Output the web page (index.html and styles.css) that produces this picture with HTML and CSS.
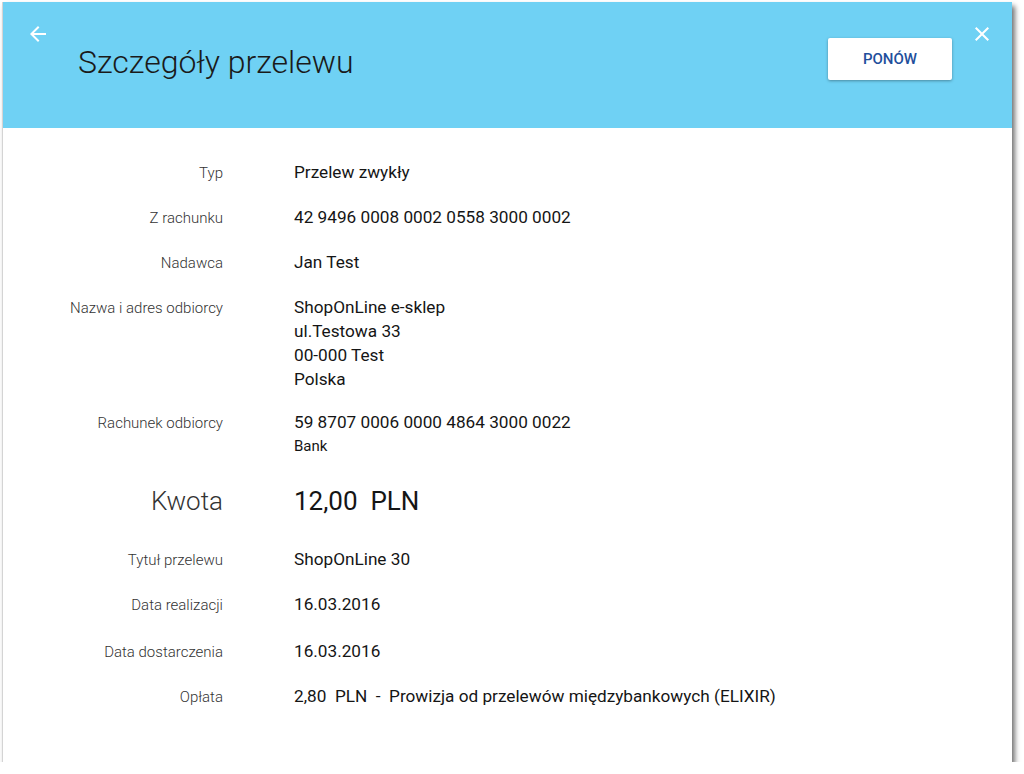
FILE: index.html
```html
<!DOCTYPE html>
<html lang="pl">
<head>
    <meta charset="UTF-8">
    <title>Szczegóły przelewu</title>
    <link rel="stylesheet" href="styles.css">
</head>
<body>
    <div class="panel">
        <div class="header">
            <div class="header-top">
                <svg class="icon" width="24" height="24" viewBox="0 0 24 24">
                    <path d="M20 11H7.83l5.59-5.59L12 4l-8 8 8 8 1.41-1.41L7.83 13H20v-2z" fill="#fff"/>
                </svg>
                <svg class="icon" width="24" height="24" viewBox="0 0 24 24">
                    <path d="M19 6.41L17.59 5 12 10.59 6.41 5 5 6.41 10.59 12 5 17.59 6.41 19 12 13.41 17.59 19 19 17.59 13.41 12z" fill="#fff"/>
                </svg>
            </div>
            <div class="header-main">
                <h1>Szczegóły przelewu</h1>
                <button class="btn">PONÓW</button>
            </div>
        </div>

        <div class="details">
            <div class="row">
                <div class="label">Typ</div>
                <div class="value">Przelew zwykły</div>
            </div>
            <div class="row">
                <div class="label">Z rachunku</div>
                <div class="value">42 9496 0008 0002 0558 3000 0002</div>
            </div>
            <div class="row">
                <div class="label">Nadawca</div>
                <div class="value">Jan Test</div>
            </div>
            <div class="row row-address">
                <div class="label">Nazwa i adres odbiorcy</div>
                <div class="value">ShopOnLine e-sklep<br>ul.Testowa 33<br>00-000 Test<br>Polska</div>
            </div>
            <div class="row row-account">
                <div class="label">Rachunek odbiorcy</div>
                <div class="value">59 8707 0006 0000 4864 3000 0022<div class="bank">Bank</div></div>
            </div>
            <div class="row row-amount">
                <div class="label">Kwota</div>
                <div class="value">12,00&nbsp; PLN</div>
            </div>
            <div class="row">
                <div class="label">Tytuł przelewu</div>
                <div class="value">ShopOnLine 30</div>
            </div>
            <div class="row row-execution">
                <div class="label">Data realizacji</div>
                <div class="value">16.03.2016</div>
            </div>
            <div class="row">
                <div class="label">Data dostarczenia</div>
                <div class="value">16.03.2016</div>
            </div>
            <div class="row">
                <div class="label">Opłata</div>
                <div class="value">2,80&nbsp; PLN &nbsp;-&nbsp; Prowizja od przelewów międzybankowych (ELIXIR)</div>
            </div>
        </div>
    </div>
</body>
</html>
```

FILE: styles.css
```css
body {
    margin: 0;
    background: #fff;
    font-family: Roboto, "Liberation Sans", sans-serif;
}
.panel {
    width: 1010px;
    height: 760px;
    margin: 2px 0 0 2px;
    background: #fff;
    box-shadow: 3px 4px 5px rgba(0, 0, 0, 0.55);
    border-left: 1px solid #d4d4d4;
    box-sizing: border-box;
}
.header {
    height: 126px;
    background: #6fd1f4;
    box-sizing: border-box;
    padding: 20px 18px 0 23px;
}
.header-top {
    display: flex;
    justify-content: space-between;
}
.header-main {
    display: flex;
    justify-content: space-between;
    align-items: flex-start;
    margin-top: -8px;
    padding: 0 42px 0 52px;
}
h1 {
    margin: 5px 0 0;
    font-size: 32px;
    font-weight: 300;
    color: #1a1a1a;
}
.btn {
    width: 124px;
    height: 42px;
    border: none;
    border-radius: 2px;
    background: #fff;
    color: #1f4f9c;
    font-family: Roboto, "Liberation Sans", sans-serif;
    font-size: 15px;
    font-weight: 500;
    box-shadow: 0 1px 3px rgba(0, 0, 0, 0.35);
}
.details {
    padding-top: 32px;
}
.row {
    display: flex;
    align-items: baseline;
    margin-bottom: 20px;
}
.label {
    width: 220px;
    text-align: right;
    font-size: 15px;
    font-weight: 300;
    color: #333;
    line-height: 24px;
}
.value {
    margin-left: 71px;
    font-size: 17.2px;
    color: #151515;
    line-height: 24px;
}
.bank {
    font-size: 15px;
}
.row-address {
    margin-bottom: 19px;
}
.row-account {
    margin-bottom: 25px;
}
.row-amount {
    margin-bottom: 28px;
}
.row-amount .label,
.row-amount .value {
    font-size: 26px;
    line-height: 36px;
}
.row-execution {
    margin-bottom: 22px;
}
```
